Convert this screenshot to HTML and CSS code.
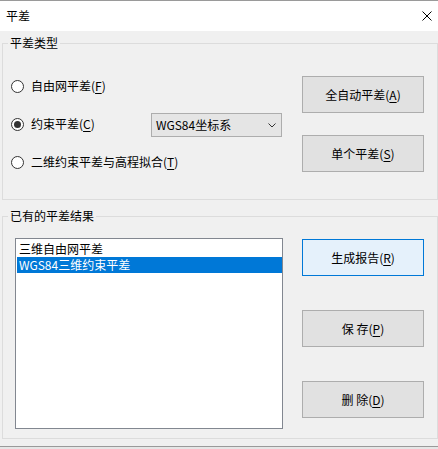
FILE: index.html
```html
<!DOCTYPE html>
<html lang="zh-CN">
<head>
<meta charset="utf-8">
<title>平差</title>
<link rel="stylesheet" href="styles.css">
</head>
<body>
<div class="window">
  <div class="topline"></div>
  <div class="titlebar">
    <span class="title">平差</span>
    <svg class="close" width="10" height="10" viewBox="0 0 10 10"><path d="M0.5 0.5 L9.5 9.5 M9.5 0.5 L0.5 9.5" stroke="#000" stroke-width="1" fill="none"/></svg>
  </div>
  <div class="client">
    <fieldset class="group group-type">
      <legend>平差类型</legend>
      <div class="type-body">
        <div class="options">
          <div class="opt"><span class="radio"></span><span class="opt-label">自由网平差(<u>F</u>)</span></div>
          <div class="opt"><span class="radio checked"></span><span class="opt-label fixed">约束平差(<u>C</u>)</span>
            <div class="select"><span>WGS84坐标系</span><svg width="8" height="5" viewBox="0 0 8 5"><path d="M0.5 0.5 L4 4 L7.5 0.5" stroke="#333" stroke-width="1" fill="none"/></svg></div>
          </div>
          <div class="opt"><span class="radio"></span><span class="opt-label">二维约束平差与高程拟合(<u>T</u>)</span></div>
        </div>
        <div class="buttons buttons-type">
          <button class="btn">全自动平差(<u>A</u>)</button>
          <button class="btn">单个平差(<u>S</u>)</button>
        </div>
      </div>
    </fieldset>
    <fieldset class="group group-results">
      <legend>已有的平差结果</legend>
      <div class="results-body">
        <div class="listbox">
          <div class="item">三维自由网平差</div>
          <div class="item selected">WGS84三维约束平差</div>
        </div>
        <div class="buttons buttons-results">
          <button class="btn focused">生成报告(<u>R</u>)</button>
          <button class="btn">保 存(<u>P</u>)</button>
          <button class="btn">删 除(<u>D</u>)</button>
        </div>
      </div>
    </fieldset>
  </div>
  <div class="bottomline"></div>
  <div class="bottomstrip"></div>
</div>
</body>
</html>
```
FILE: styles.css
```css
* { box-sizing: border-box; }
html, body { margin: 0; padding: 0; }
body {
  width: 438px;
  height: 449px;
  overflow: hidden;
  font-family: "Noto Sans CJK SC", "Noto Sans", sans-serif;
  font-size: 12px;
  color: #000;
  background: #f0f0f0;
}
u { text-decoration-thickness: 1px; text-underline-offset: 2px; }
.window { display: flex; flex-direction: column; width: 438px; height: 449px; }
.topline { height: 1px; background: #9a9a9a; }
.titlebar {
  height: 30px;
  background: #fff;
  display: flex;
  align-items: center;
  justify-content: space-between;
  padding: 0 6px;
}
.title { line-height: 16px; }
.close { display: block; }
.client {
  height: 415px;
  background: #f0f0f0;
  padding-left: 2px;
  display: flex;
  flex-direction: column;
}
.group {
  margin: 0;
  padding: 0;
  border: 1px solid #dcdcdc;
  min-width: 0;
  width: 436px;
}
.group legend {
  margin-left: 5px;
  padding: 0 2px;
  line-height: 16px;
  height: 16px;
}
.group-type { margin-top: 4px; height: 165px; }
.group-results { margin-top: 8px; height: 231px; }
.type-body { display: flex; }
.options {
  flex: 1;
  margin-top: 23px;
  padding-left: 8px;
  display: flex;
  flex-direction: column;
  gap: 14px;
}
.opt { height: 24px; display: flex; align-items: center; }
.radio {
  width: 13px;
  height: 13px;
  border: 1px solid #333;
  border-radius: 50%;
  background: #fff;
  margin-right: 7px;
  display: flex;
  align-items: center;
  justify-content: center;
  flex: none;
}
.radio.checked::after {
  content: "";
  width: 7px;
  height: 7px;
  border-radius: 50%;
  background: #333;
}
.opt-label { line-height: 16px; white-space: nowrap; }
.opt-label.fixed { width: 120px; }
.select {
  width: 131px;
  height: 24px;
  margin-top: 2px;
  border: 1px solid #adadad;
  background: #e5e5e5;
  display: flex;
  align-items: center;
  justify-content: space-between;
  padding: 0 5px 0 4px;
  line-height: 16px;
}
.select svg { display: block; }
.buttons { width: 122px; margin-right: 13px; display: flex; flex-direction: column; }
.buttons-type { margin-top: 25px; gap: 22px; }
.buttons-results { margin-top: 15px; gap: 34px; }
.btn {
  height: 37px;
  width: 122px;
  border: 1px solid #adadad;
  background: #e1e1e1;
  font-family: inherit;
  font-size: 12px;
  color: #000;
  padding: 0;
  line-height: 16px;
}
.btn.focused { border-color: #0078d7; background: #e5f1fb; }
.results-body { display: flex; justify-content: space-between; }
.listbox {
  margin-top: 14px;
  margin-left: 12px;
  width: 268px;
  height: 191px;
  border: 1px solid #828790;
  background: #fff;
  padding: 2px 0 0 1px;
}
.item { height: 16px; line-height: 16px; padding-left: 2px; white-space: nowrap; }
.item.selected { background: #0078d7; color: #fff; }
.bottomline { height: 1px; background: #9a9a9a; }
.bottomstrip { flex: 1; background: #e6e6e6; }
```
